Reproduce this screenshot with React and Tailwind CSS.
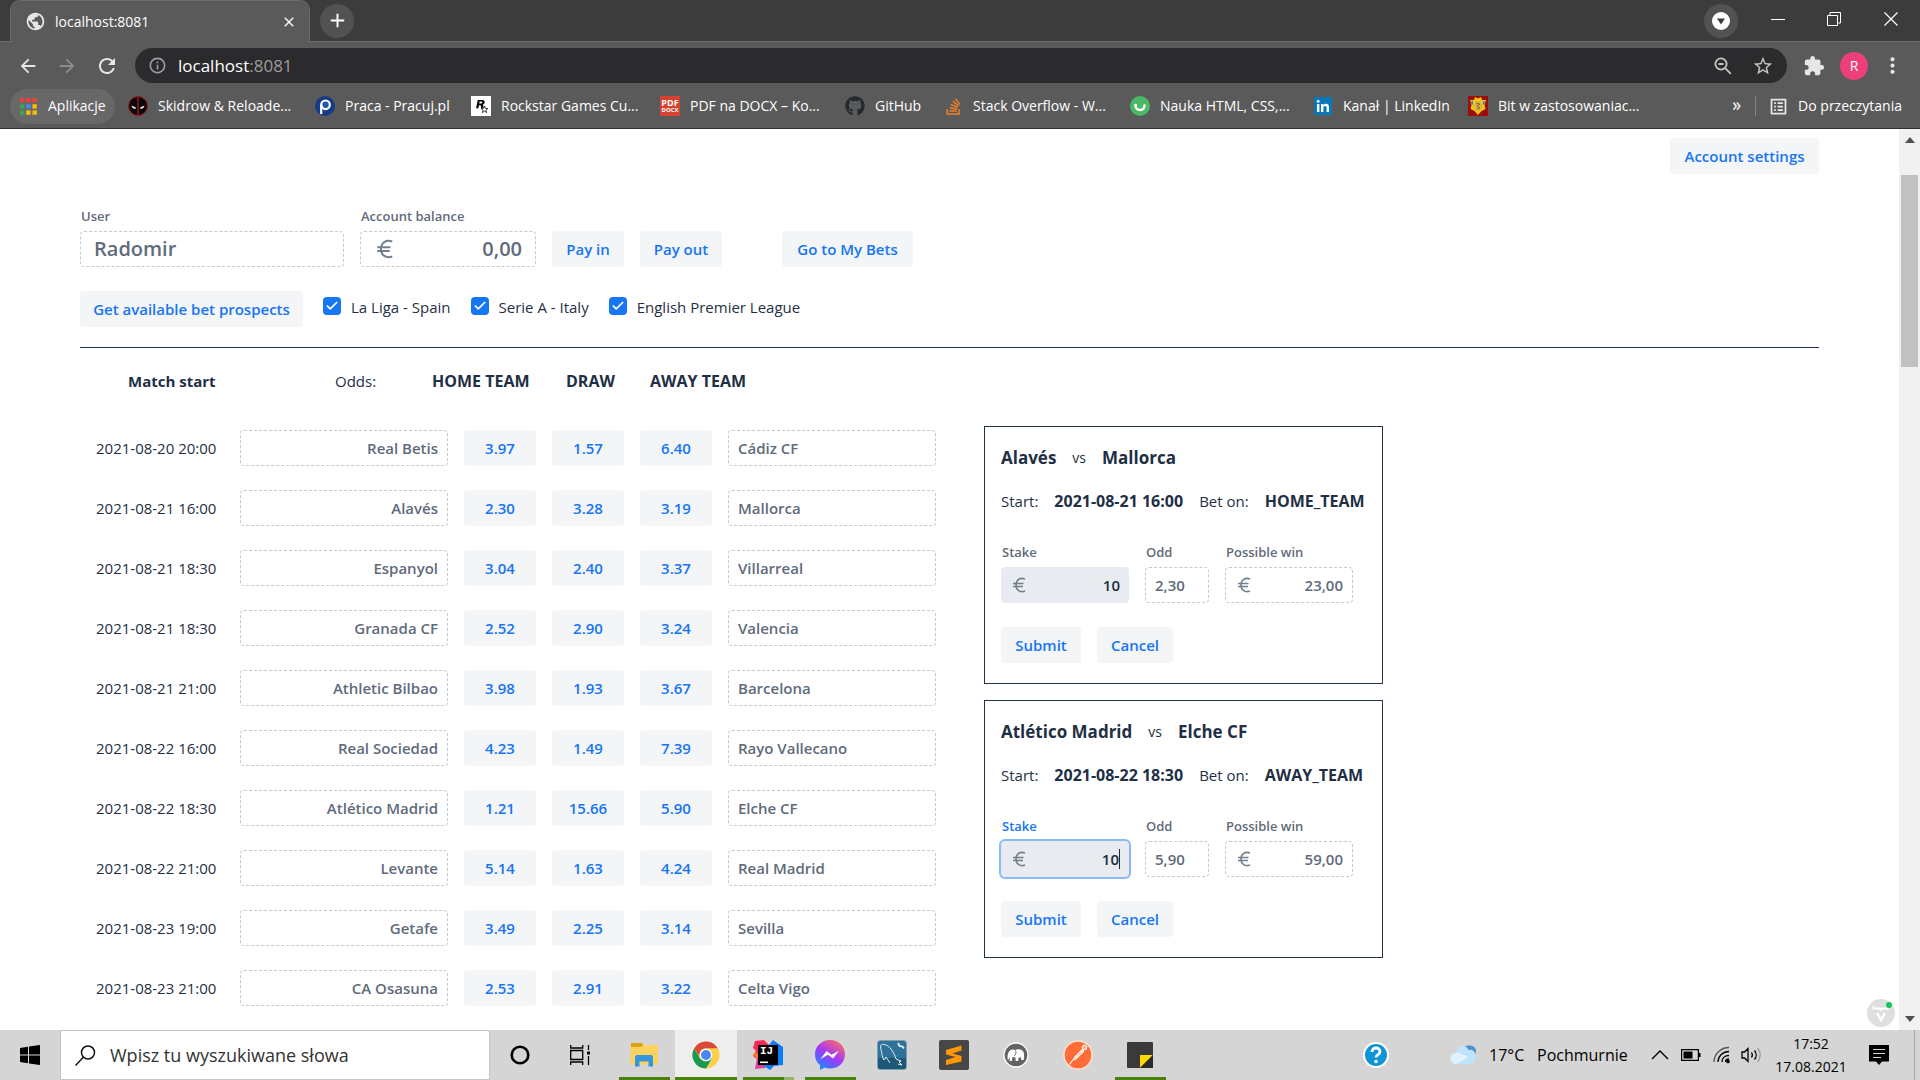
import React from "react";
import { FaGithub, FaStackOverflow } from "react-icons/fa";
import {
  MdArrowBack,
  MdArrowForward,
  MdRefresh,
  MdInfoOutline,
  MdStarBorder,
  MdExtension,
  MdMoreVert,
  MdPublic,
  MdClose,
  MdAdd,
  MdOutlineListAlt,
} from "react-icons/md";
import { Check } from "lucide-react";

const MATCHES = [
  ["2021-08-20 20:00", "Real Betis", "3.97", "1.57", "6.40", "Cádiz CF"],
  ["2021-08-21 16:00", "Alavés", "2.30", "3.28", "3.19", "Mallorca"],
  ["2021-08-21 18:30", "Espanyol", "3.04", "2.40", "3.37", "Villarreal"],
  ["2021-08-21 18:30", "Granada CF", "2.52", "2.90", "3.24", "Valencia"],
  ["2021-08-21 21:00", "Athletic Bilbao", "3.98", "1.93", "3.67", "Barcelona"],
  ["2021-08-22 16:00", "Real Sociedad", "4.23", "1.49", "7.39", "Rayo Vallecano"],
  ["2021-08-22 18:30", "Atlético Madrid", "1.21", "15.66", "5.90", "Elche CF"],
  ["2021-08-22 21:00", "Levante", "5.14", "1.63", "4.24", "Real Madrid"],
  ["2021-08-23 19:00", "Getafe", "3.49", "2.25", "3.14", "Sevilla"],
  ["2021-08-23 21:00", "CA Osasuna", "2.53", "2.91", "3.22", "Celta Vigo"],
];

/* ---------- browser window ---------- */

function TabStrip() {
  return (
    <div className="flex h-[42px] shrink-0 items-center border-b border-[#6b6b6b] bg-[#3c3c3c] pl-[10px]">
      <div className="mt-px flex h-[42px] w-[300px] items-center rounded-t-[10px] border border-b-0 border-[#6b6b6b] bg-[#5a5a5a] pr-3 pl-[14px] text-white">
        <MdPublic size={21} className="text-[#e6e6e6]" />
        <span className="ml-[9px] flex-1 text-sm">localhost:8081</span>
        <button aria-label="Close tab"><MdClose size={16} /></button>
      </div>
      <button aria-label="New tab" className="ml-[10px] flex size-[34px] items-center justify-center rounded-full bg-[#525252] text-white">
        <MdAdd size={23} />
      </button>
      <div className="flex-1" />
      <button aria-label="Search tabs" className="flex size-[34px] items-center justify-center rounded-full bg-[#525252]">
        <svg width="18" height="18" viewBox="0 0 18 18"><circle cx="9" cy="9" r="9" fill="#fff" /><path d="M5 6.500h8L9 12.500z" fill="#3c3c3c" /></svg>
      </button>
      <div className="ml-3 flex items-center pb-1 text-white">
        <button aria-label="Minimize" className="flex h-8 w-14 items-center justify-center">
          <svg width="14" height="14" viewBox="0 0 14 14" stroke="currentColor"><path d="M0 7.500h14" /></svg>
        </button>
        <button aria-label="Restore" className="flex h-8 w-14 items-center justify-center">
          <svg width="14" height="14" viewBox="0 0 14 14" fill="none" stroke="currentColor"><path d="M.5 3.500h10v10H.5zM3 3V.5h10.500v10.500H11" /></svg>
        </button>
        <button aria-label="Close" className="flex h-8 w-[58px] items-center justify-center">
          <svg width="14" height="14" viewBox="0 0 14 14" stroke="currentColor" strokeWidth="1.200"><path d="M.5.5l13 13M13.500.5l-13 13" /></svg>
        </button>
      </div>
    </div>
  );
}

function Toolbar() {
  return (
    <div className="flex h-[47px] shrink-0 items-center bg-[#5a5a5a] pr-[15px] pl-[17px] text-[#e6e6e6]">
      <button aria-label="Back" className="w-[39px]"><MdArrowBack size={22} /></button>
      <button aria-label="Forward" className="w-[39px] text-[#8d8d8d]"><MdArrowForward size={22} /></button>
      <button aria-label="Reload" className="w-10"><MdRefresh size={24} /></button>
      <div className="flex h-[35px] flex-1 items-center rounded-full bg-[#2b2b2d] px-[13px]">
        <MdInfoOutline size={19} className="text-[#9aa0a6]" />
        <div role="textbox" aria-label="Address" className="ml-[11px] flex-1 text-[17px] text-white">
          localhost<span className="text-[#9b9b9d]">:8081</span>
        </div>
        <button aria-label="Zoom level">
          <svg width="18" height="18" viewBox="0 0 18 18" fill="none" stroke="#c5c5c5" strokeWidth="1.800"><circle cx="7" cy="7" r="5.600" /><path d="M11.200 11.200l5.600 5.600M4.500 7h5" /></svg>
        </button>
        <button aria-label="Bookmark" className="ml-5 text-[#c5c5c5]"><MdStarBorder size={22} /></button>
      </div>
      <button aria-label="Extensions" className="ml-4"><MdExtension size={22} /></button>
      <button aria-label="Profile" className="ml-[15px] flex size-7 items-center justify-center rounded-full bg-[#ec407a] text-sm text-white">R</button>
      <button aria-label="Menu" className="ml-3"><MdMoreVert size={25} /></button>
    </div>
  );
}

const apps = ["#ea4335", "#ea4335", "#ea4335", "#34a853", "#4285f4", "#fbbc05", "#34a853", "#fbbc05", "#fbbc05"];

function AppsIcon() {
  return (
    <svg width="17" height="17" viewBox="0 0 17 17">
      {apps.map((c, i) => (
        <rect key={i} x={(i % 3) * 6.2} y={Math.floor(i / 3) * 6.2} width="4.400" height="4.400" fill={c} />
      ))}
    </svg>
  );
}

function MaskIcon() {
  return (
    <svg width="20" height="20" viewBox="0 0 20 20">
      <circle cx="10" cy="10" r="9.500" fill="#0a0a0a" stroke="#a31621" />
      <path d="M9.400 1h1.200v18H9.400z" fill="#c4161c" />
      <path d="M3.500 9.500l4.500 2.200c0 1.800-3.700 1.200-4.500-2.200zM16.500 9.500L12 11.700c0 1.800 3.700 1.200 4.500-2.200z" fill="#fff" />
    </svg>
  );
}

function PracujIcon() {
  return (
    <svg width="20" height="20" viewBox="0 0 20 20">
      <circle cx="10" cy="10" r="10" fill="#163c86" />
      <circle cx="10.500" cy="8.800" r="4.300" fill="#1e57ad" stroke="#fff" strokeWidth="2.200" />
      <path d="M6.200 8.500V18" stroke="#fff" strokeWidth="2.200" />
    </svg>
  );
}

function RockstarIcon() {
  return (
    <svg width="20" height="20" viewBox="0 0 20 20">
      <path d="M0 0h20v20H0z" fill="#fff" />
      <path d="M6.800 4h4.600c3.200 0 2.900 4 .2 4.600 1.200.5.600 2 .7 3.100l-2.200.2c-.4-1 .3-2.700-1-2.700H8l-.6 3H5.100zM8.600 5.600l-.4 2h1.900c1.500 0 1.700-2 .2-2z" fill="#000" fillRule="evenodd" />
      <path d="M13.500 10l.9 2.400 2.500.1-2 1.600.8 2.500-2.200-1.500-2.100 1.500.7-2.500-2-1.600 2.500-.1z" fill="#fff" stroke="#111" strokeWidth=".8" />
    </svg>
  );
}

function PdfIcon() {
  return (
    <span className="flex size-5 flex-col items-center justify-center bg-[#d8412f] font-bold text-white">
      <span className="text-[9px] leading-[9px]">PDF</span>
      <span className="text-[6px] leading-[7px]">DOCX</span>
    </span>
  );
}

function SmileIcon() {
  return (
    <svg width="20" height="20" viewBox="0 0 20 20">
      <circle cx="10" cy="10" r="10" fill="#4bb865" />
      <path d="M5.500 9.500c0 6 9 6 9 0" fill="none" stroke="#fff" strokeWidth="2.500" strokeLinecap="round" />
      <circle cx="5.600" cy="9" r="1.300" fill="#fff" />
    </svg>
  );
}

function LinkedInIcon() {
  return (
    <svg width="18" height="18" viewBox="0 0 18 18">
      <rect width="18" height="18" rx="1" fill="#0a77b7" />
      <path d="M3 7h2.400v8H3zM7 7h2.300v1.200C10 7.200 10.800 6.800 12 6.800c2.300 0 3 1.500 3 3.700V15h-2.400v-4c0-1.200-.3-2-1.400-2-1.200 0-1.800.9-1.800 2.100V15H7z" fill="#fff" />
      <circle cx="4.200" cy="4.400" r="1.400" fill="#fff" />
    </svg>
  );
}

function CrestIcon() {
  return (
    <svg width="20" height="20" viewBox="0 0 20 20">
      <path d="M0 0h20v20H0z" fill="#9c0d0d" />
      <path d="M7 1l3 1.500L13 1l1 3h4l-1.500 5 1 4-4 2-3.500 4-3.500-4-4-2 1-4L2 4h4z" fill="#f0c419" />
      <path d="M2 6l3-1v4zM18 6l-3-1v4z" fill="#4c75b8" />
      <ellipse cx="10" cy="10" rx="3.600" ry="4.600" fill="#d9b04a" />
      <path d="M8 7l4 1-3 2 3 2-3 1.500" stroke="#8d6b20" fill="none" />
    </svg>
  );
}

function Bookmark({ icon, label, width }) {
  return (
    <a href="#bookmark" className={`flex shrink-0 items-center gap-[10px] whitespace-nowrap ${width}`}>
      <span className="flex w-5 justify-center">{icon}</span>
      {label}
    </a>
  );
}

function Bookmarks() {
  return (
    <nav className="flex h-10 shrink-0 items-center border-b border-[#2f2f31] bg-[#5a5a5a] pb-[5px] pl-[10px] text-sm text-white">
      <a href="#apps" className="mr-[13px] flex h-[35px] w-[105px] items-center gap-[11px] rounded-full bg-[#686868] pl-[10px]">
        <AppsIcon />
        Aplikacje
      </a>
      <Bookmark icon={<MaskIcon />} label="Skidrow & Reloade..." width="w-[187px]" />
      <Bookmark icon={<PracujIcon />} label="Praca - Pracuj.pl" width="w-[156px]" />
      <Bookmark icon={<RockstarIcon />} label="Rockstar Games Cu..." width="w-[189px]" />
      <Bookmark icon={<PdfIcon />} label="PDF na DOCX – Ko..." width="w-[185px]" />
      <Bookmark icon={<FaGithub size={20} color="#24292e" />} label="GitHub" width="w-[98px]" />
      <Bookmark icon={<FaStackOverflow size={19} color="#f48024" />} label="Stack Overflow - W..." width="w-[187px]" />
      <Bookmark icon={<SmileIcon />} label="Nauka HTML, CSS,..." width="w-[183px]" />
      <Bookmark icon={<LinkedInIcon />} label="Kanał | LinkedIn" width="w-[155px]" />
      <Bookmark icon={<CrestIcon />} label="Bit w zastosowaniac..." width="w-[190px]" />
      <span className="flex-1" />
      <button aria-label="More bookmarks" className="pb-1 text-lg">»</button>
      <span className="mr-3 ml-[14px] h-5 w-px bg-[#858585]" />
      <button className="mr-[18px] flex items-center gap-[9px]">
        <MdOutlineListAlt size={21} className="text-[#e6e6e6]" />
        Do przeczytania
      </button>
    </nav>
  );
}

/* ---------- page ---------- */

function Btn({ children, className = "" }) {
  return (
    <button className={`h-9 rounded bg-[#f3f5f7] text-center text-[15px] font-semibold whitespace-nowrap text-[#1676f3] ${className}`}>
      {children}
    </button>
  );
}

function Field({ id, label, value, width, large, euro, right, kind = "readonly" }) {
  const box = {
    readonly: "border border-dashed border-[#c3c9d1] text-[#5f6b7b]",
    filled: "bg-[#e8ebef] text-[#1b2b41]",
    focused: "bg-[#e8ebef] text-[#1b2b41] ring-2 ring-[#8abaf9]",
  }[kind];
  return (
    <div className={`flex flex-col ${width}`}>
      <label htmlFor={id} className={`mb-1 pl-px text-[13px] leading-[21px] font-semibold whitespace-nowrap ${kind === "focused" ? "text-[#1676f3]" : "text-[#5f6b7b]"}`}>
        {label}
      </label>
      <div className={`flex h-9 items-center rounded ${box} ${large ? "px-[13px] text-xl" : "px-[9px] text-[15px]"}`}>
        {euro && <EuroIcon large={large} />}
        <input
          id={id}
          defaultValue={value}
          readOnly={kind === "readonly"}
          className={`w-full min-w-0 flex-1 bg-transparent font-semibold outline-none ${right ? "text-right" : ""}`}
        />
        {kind === "focused" && <span className="h-5 w-px bg-[#1b2b41]" />}
      </div>
    </div>
  );
}

function EuroIcon({ large }) {
  return (
    <svg className={large ? "ml-[2px] size-5" : "ml-[2px] size-4"} viewBox="0 0 16 16" fill="none" stroke="#737f8e" strokeWidth="1.600">
      <path d="M13 2C8 .2 4 3 4 8s4 7.800 9 6M1 6.500h10.500M1 9.500h10" />
    </svg>
  );
}

function League({ id, label }) {
  return (
    <div className="flex items-start">
      <span className="relative mt-[6px] size-[18px]">
        <input id={id} type="checkbox" defaultChecked className="block size-[18px] appearance-none rounded bg-[#1676f3]" />
        <Check size={14} strokeWidth={3} className="pointer-events-none absolute top-[2px] left-[2px] text-white" />
      </span>
      <label htmlFor={id} className="mt-1 pl-[10px] text-[15px] leading-6 whitespace-nowrap">{label}</label>
    </div>
  );
}

function MatchTable() {
  const team = "block h-9 w-[208px] rounded border border-dashed border-[#c3c9d1] px-[9px] text-[15px] font-semibold text-[#5f6b7b]";
  return (
    <table className="block text-[15px]">
      <thead className="block">
        <tr className="flex py-[21px] leading-6 whitespace-nowrap">
          <th className="w-[255px] pl-12 text-left font-bold">Match start</th>
          <th className="w-[97px] text-left font-normal">Odds:</th>
          <th className="w-[134px] text-left text-base font-bold">HOME TEAM</th>
          <th className="w-[84px] text-left text-base font-bold">DRAW</th>
          <th className="text-left text-base font-bold">AWAY TEAM</th>
        </tr>
      </thead>
      <tbody className="flex flex-col gap-6 pt-4">
        {MATCHES.map(([time, home, h, d, a, away], i) => (
          <tr key={i} className="flex items-center gap-4">
            <td className="w-36 pl-4 whitespace-nowrap">{time}</td>
            <td><input readOnly aria-label="Home team" value={home} className={`${team} text-right`} /></td>
            <td><Btn className="w-[72px]">{h}</Btn></td>
            <td><Btn className="w-[72px]">{d}</Btn></td>
            <td><Btn className="w-[72px]">{a}</Btn></td>
            <td><input readOnly aria-label="Away team" value={away} className={team} /></td>
          </tr>
        ))}
      </tbody>
    </table>
  );
}

function BetSlip({ id, home, away, start, side, odd, win, focused }) {
  return (
    <section className="w-[399px] border border-[#233348] px-4 pt-4 pb-5">
      <h2 className="flex items-center gap-4 text-[17px] leading-[30px] font-bold">
        {home}
        <span className="text-sm font-normal">vs</span>
        {away}
      </h2>
      <p className="mt-4 flex gap-4 text-[15px] leading-6 whitespace-nowrap">
        <span>Start:</span>
        <b className="text-base">{start}</b>
        <span>Bet on:</span>
        <b className="text-base">{side}</b>
      </p>
      <div className="mt-[29px] flex gap-4">
        <Field id={`${id}-stake`} label="Stake" value="10" width="w-32" euro right kind={focused ? "focused" : "filled"} />
        <Field id={`${id}-odd`} label="Odd" value={odd} width="w-16" />
        <Field id={`${id}-win`} label="Possible win" value={win} width="w-32" euro right />
      </div>
      <div className="mt-6 flex gap-4">
        <Btn className="w-20">Submit</Btn>
        <Btn className="w-[76px]">Cancel</Btn>
      </div>
    </section>
  );
}

function Page() {
  return (
    <main className="min-w-0 flex-1 overflow-hidden bg-white px-20 pt-[9px] text-[#1f2f45]">
      <div className="flex justify-end">
        <Btn className="w-[149px]">Account settings</Btn>
      </div>
      <div className="mt-8 flex items-end gap-4">
        <Field id="user" label="User" value="Radomir" width="w-[264px]" large />
        <Field id="balance" label="Account balance" value="0,00" width="w-[176px]" large euro right />
        <Btn className="w-[72px]">Pay in</Btn>
        <Btn className="w-[82px]">Pay out</Btn>
        <Btn className="ml-11 w-[131px]">Go to My Bets</Btn>
      </div>
      <div className="mt-6 flex gap-5">
        <Btn className="w-[223px]">Get available bet prospects</Btn>
        <League id="laliga" label="La Liga - Spain" />
        <League id="seriea" label="Serie A - Italy" />
        <League id="premier" label="English Premier League" />
      </div>
      <hr className="mt-5 border-[#233348]" />
      <div className="flex gap-12">
        <MatchTable />
        <div className="flex flex-col gap-4 pt-[78px]">
          <BetSlip id="bet1" home="Alavés" away="Mallorca" start="2021-08-21 16:00" side="HOME_TEAM" odd="2,30" win="23,00" />
          <BetSlip id="bet2" home="Atlético Madrid" away="Elche CF" start="2021-08-22 18:30" side="AWAY_TEAM" odd="5,90" win="59,00" focused />
        </div>
      </div>
    </main>
  );
}

function Scrollbar() {
  return (
    <div className="flex w-[21px] shrink-0 flex-col items-center bg-[#f1f1f1] py-2">
      <svg width="10" height="6" viewBox="0 0 10 6"><path d="M0 6l5-6 5 6z" fill="#505050" /></svg>
      <div className="mt-8 h-48 w-[17px] bg-[#c1c1c1]" />
      <span className="flex-1" />
      <svg width="10" height="6" viewBox="0 0 10 6"><path d="M0 0l5 6 5-6z" fill="#505050" /></svg>
    </div>
  );
}

function DevBadge() {
  return (
    <button aria-label="Developer tools" className="absolute right-[25px] bottom-[3px]">
      <svg width="28" height="28" viewBox="0 0 28 28">
        <circle cx="14" cy="14" r="14" fill="#dfdfdf" />
        <path d="M6.500 7v2.500h6L14 11l1.500-1.500h6" fill="none" stroke="#fff" strokeWidth="2" />
        <path d="M10 14l4 7 4-7" fill="none" stroke="#fff" strokeWidth="2.400" />
        <circle cx="22" cy="6" r="3" fill="#12c45a" />
      </svg>
    </button>
  );
}

/* ---------- taskbar ---------- */

function FolderIcon() {
  return (
    <svg width="28" height="24" viewBox="0 0 28 24">
      <path d="M1 0h11l1.500 2L12 5H1z" fill="#e09f10" />
      <path d="M.5 4H11l2-2h14a1 1 0 011 1v18.500H.5z" fill="#fdd35f" />
      <path d="M5 23.500V14a2 2 0 012-2h14a2 2 0 012 2v9.500h-4.500v-5h-9v5z" fill="#3595dd" />
    </svg>
  );
}

function ChromeIcon() {
  return (
    <svg width="28" height="28" viewBox="0 0 28 28">
      <circle cx="14" cy="14" r="13.500" fill="#fcd04b" />
      <path d="M2.300 7.200A13.500 13.500 0 0014 27.500l6-10.200-6 3.200-6-3z" fill="#189a50" />
      <path d="M2.300 7.200A13.500 13.500 0 0125.700 7.300H14c-5 0-7 4-6.500 8.500z" fill="#d94a3d" />
      <circle cx="14" cy="14" r="6.300" fill="#fff" />
      <circle cx="14" cy="14" r="5" fill="#4a87ee" />
    </svg>
  );
}

function IdeaIcon() {
  return (
    <span className="relative block size-[30px]">
      <svg width="30" height="30" viewBox="0 0 30 30">
        <path d="M2 1l9-1 6 6-9 16-8-6 3-5-3-3z" fill="#fe2857" />
        <path d="M0 14l8-2-2 9z" fill="#fc801d" />
        <path d="M4 18l10 4-2 6-10 1z" fill="#dd3ea0" />
        <path d="M16 5l4-5 10 7v18l-9 1-4 4-6-4z" fill="#087cfa" />
        <path d="M5 5h20v20H5z" fill="#000" />
        <path d="M7 21.500h8v1.600H7z" fill="#fff" />
      </svg>
      <span className="absolute top-[6px] left-[7px] font-['Liberation_Mono'] text-[11px] leading-[10px] font-bold text-white">IJ</span>
    </span>
  );
}

function MessengerIcon() {
  return (
    <svg width="30" height="30" viewBox="0 0 30 30">
      <defs>
        <linearGradient id="msg" x1=".15" y1="1" x2=".8" y2="0">
          <stop offset="0" stopColor="#0a95ff" />
          <stop offset=".5" stopColor="#a237fb" />
          <stop offset="1" stopColor="#ff6a68" />
        </linearGradient>
      </defs>
      <path d="M15 0C6.500 0 0 6.200 0 14.500c0 4.400 1.800 8 5 10.600V30l4.500-2.500c1.700.6 3.600.9 5.500.9 8.500 0 15-6 15-14C30 6.200 23.500 0 15 0z" fill="url(#msg)" />
      <path d="M5.500 19l6-8 5 3.800 7.500-4-6 7.700-5-3.800z" fill="#fff" />
    </svg>
  );
}

function MySqlIcon() {
  return (
    <svg width="30" height="30" viewBox="0 0 30 30">
      <rect x=".5" y=".5" width="29" height="29" rx="3" fill="#2f7199" stroke="#7f9fb2" />
      <path d="M1 18h28v9a2 2 0 01-2 2H3a2 2 0 01-2-2z" fill="#1f5777" />
      <path d="M7 20c-2-3-2-6-2.500-8.500C3.500 8 3 5 4.500 4.500 7 4 11 5 14 9c3 4 4 7 5 10l5 2-2 1 3 3-4-1M7 20l2-3 4 6" fill="none" stroke="#e4eef4" strokeWidth="1" />
      <path d="M21 3l1.500 3 3 .5 1.500 2" fill="none" stroke="#e4eef4" strokeWidth="1.800" />
    </svg>
  );
}

function SublimeIcon() {
  return (
    <svg width="30" height="30" viewBox="0 0 30 30">
      <rect width="30" height="30" rx="2" fill="#474747" />
      <path d="M22.500 5.500v5l-9 3 9 2.500v5.500L7 25v-5l9.500-3L7 14.500V10z" fill="#ff9800" />
    </svg>
  );
}

function ElephantIcon() {
  return (
    <svg width="26" height="26" viewBox="0 0 26 26">
      <circle cx="13" cy="13" r="12" fill="#646464" stroke="#fff" strokeWidth="1.300" />
      <path d="M5 18.500c-1-3-.5-8 2-10 1.500-1.500 4-1.200 5.500-.5C16 6.500 20.500 7.500 21 12c.3 2 0 4-.3 6h-2.500l-.5-3.500c-.6 1-1.200 1.400-2.200 1.500l-.3 3h-2.500l-.4-4c-1.200.3-2 .2-3 0l-.3 4H6.700V15z" fill="#fff" />
      <path d="M12.500 8.500c1 2 .5 4.500-1.500 5.500" stroke="#646464" strokeWidth=".9" fill="none" />
    </svg>
  );
}

function PostmanIcon() {
  return (
    <svg width="30" height="30" viewBox="0 0 30 30">
      <circle cx="15" cy="15" r="14" fill="#ff6c37" stroke="#fbe3d8" strokeWidth="1.400" />
      <circle cx="21.500" cy="7.500" r="2.300" fill="#ffb090" stroke="#fff" />
      <path d="M19.500 9.500l-7.500 7.500 2.500.5 6-6zM12 17l-5.500 7.500M14.500 17.500l-3.500 2.500" fill="#ffb090" stroke="#fff" strokeWidth="1.100" />
    </svg>
  );
}

function NotesIcon() {
  return (
    <svg width="26" height="26" viewBox="0 0 26 26">
      <rect width="26" height="26" rx="1" fill="#3a3a3a" />
      <path d="M13 13h13L13 26z" fill="#ffd800" />
      <path d="M26 13v13H13z" fill="#2b2b2b" />
    </svg>
  );
}

const TASKS = [
  { name: "Explorer", icon: <FolderIcon />, bar: "w-[51px] bg-[#47820b]" },
  { name: "Chrome", icon: <ChromeIcon />, bar: "w-full bg-[#47820b]", active: true },
  { name: "IntelliJ IDEA", icon: <IdeaIcon />, bar: "w-[51px] border-r-[10px] border-[#93b56c] bg-[#47820b]" },
  { name: "Messenger", icon: <MessengerIcon />, bar: "w-[51px] bg-[#47820b]" },
  { name: "MySQL Workbench", icon: <MySqlIcon /> },
  { name: "Sublime Text", icon: <SublimeIcon /> },
  { name: "MAMP", icon: <ElephantIcon /> },
  { name: "Postman", icon: <PostmanIcon /> },
  { name: "Notes", icon: <NotesIcon />, bar: "w-[51px] bg-[#47820b]" },
];

function Taskbar() {
  return (
    <footer className="flex h-[50px] shrink-0 items-center bg-[#d5d5d5] text-black">
      <button aria-label="Start" className="flex w-[60px] justify-center">
        <svg width="20" height="20" viewBox="0 0 20 20"><path d="M0 3l8-1.200v7.700H0zM9 1.600L20 0v9.500H9zM0 10.500h8v7.700L0 17zM9 10.500h11V20L9 18.400z" /></svg>
      </button>
      <label className="flex h-[50px] w-[430px] items-center border border-[#c4c4c4] bg-white pl-[14px]">
        <svg width="21" height="21" viewBox="0 0 21 21" fill="none" stroke="#111" strokeWidth="1.500"><circle cx="13" cy="7.500" r="6.500" /><path d="M8.500 12L.5 20.500" /></svg>
        <input aria-label="Search" placeholder="Wpisz tu wyszukiwane słowa" className="ml-[14px] flex-1 text-lg outline-none placeholder:text-[#333]" />
      </label>
      <button aria-label="Cortana" className="flex w-[60px] justify-center">
        <svg width="20" height="20" viewBox="0 0 20 20"><circle cx="10" cy="10" r="8.300" fill="none" stroke="#000" strokeWidth="2.600" /></svg>
      </button>
      <button aria-label="Task view" className="mr-[3px] flex w-[60px] justify-center">
        <svg width="20" height="20" viewBox="0 0 20 20" fill="none" stroke="#000" strokeWidth="1.300"><path d="M.7 0v3h12V0M.7 5.500h12v9H.7zM.7 20v-3h12v3M18.500 0v5M18.500 11v9" /><path d="M17 6.500h3v3h-3z" fill="#000" stroke="none" /></svg>
      </button>
      {TASKS.map((t) => (
        <button key={t.name} aria-label={t.name} className={`relative flex h-full w-[62px] items-center justify-center ${t.active ? "bg-[#eeeeee]" : ""}`}>
          {t.icon}
          {t.bar && <span className="absolute inset-x-0 bottom-0 flex justify-center"><span className={`h-[3px] ${t.bar}`} /></span>}
        </button>
      ))}
      <span className="flex-1" />
      <button aria-label="Help" className="mr-[61px]">
        <svg width="26" height="26" viewBox="0 0 26 26"><circle cx="13" cy="13" r="12" fill="#0f95d7" stroke="#fff" strokeWidth="2" /><path d="M9 10c0-5.500 8-5 8-.5 0 3-4 3.200-4 6" fill="none" stroke="#fff" strokeWidth="2.800" /><circle cx="13" cy="19.500" r="1.800" fill="#fff" /></svg>
      </button>
      <button className="flex items-center text-base whitespace-nowrap">
        <svg width="27" height="20" viewBox="0 0 27 20" className="mr-[12px]">
          <path d="M14 2c5-3 12-1 12 4 0 3-2 5-4 5z" fill="#4d8fd0" />
          <path d="M6 19a5.500 5.500 0 010-11C7 3 9 1 12.500 1S18 3 18.500 5c4-1 7 1.500 7 6 0 5-2 8-6 8z" fill="#bfe3fa" />
          <path d="M6 19a5.500 5.500 0 010-11c3-1 5 0 6.500 2 2-1 4.500 0 5 3" fill="#dff2fd" />
        </svg>
        <span className="w-12 text-left">17°C</span>
        <span className="w-[114px] text-left">Pochmurnie</span>
      </button>
      <svg width="18" height="10" viewBox="0 0 18 10" fill="none" stroke="#000" strokeWidth="1.400"><path d="M1 9l8-8 8 8" /></svg>
      <svg width="20" height="12" viewBox="0 0 20 12" className="ml-3"><path d="M.6.6h16.800v10.800H.6z" fill="none" stroke="#000" strokeWidth="1.200" /><path d="M2.500 2.500h9v7h-9zM18 4h1.500v4H18z" /></svg>
      <svg width="18" height="18" viewBox="0 0 18 18" fill="none" stroke="#000" strokeWidth="1.300" className="ml-3">
        <path d="M1 16C1 8 8 1.500 16 1.500" stroke="#555" /><path d="M5 16C5 10 10 5.500 16 5.500M9 16c0-4 3-6.500 7-6.500" /><path d="M12.500 16c0-2 1.500-3 3.500-3" /><circle cx="15" cy="15.500" r="1.200" fill="#000" />
      </svg>
      <svg width="22" height="18" viewBox="0 0 22 18" fill="none" stroke="#000" strokeWidth="1.300" className="ml-[10px]">
        <path d="M1 6h2.500L7 2.500v13L3.500 12H1zM10.500 6.500c1 1.500 1 3.500 0 5M13.500 4.500c2.200 2.600 2.200 6.400 0 9" /><path d="M16.500 2c3.600 4 3.600 10 0 14" stroke="#999" />
      </svg>
      <div className="ml-3 w-[72px] text-center text-sm leading-[23px]">
        <div>17:52</div>
        <div>17.08.2021</div>
      </div>
      <button aria-label="Notifications" className="mr-[25px] ml-[22px]">
        <svg width="20" height="20" viewBox="0 0 20 20"><path d="M0 0h20v16.500h-7L10 20l-3-3.500H0z" /><path d="M4 4.500h12M4 8.500h12M4 12.500h8" stroke="#d5d5d5" strokeWidth="1.200" /></svg>
      </button>
      <span className="mr-[5px] h-full w-px bg-[#a5a5a5]" />
    </footer>
  );
}

export default function App() {
  return (
    <div className="flex h-screen flex-col overflow-hidden font-['Open_Sans','Noto_Sans',sans-serif]">
      <TabStrip />
      <Toolbar />
      <Bookmarks />
      <div className="relative flex min-h-0 flex-1">
        <Page />
        <Scrollbar />
        <DevBadge />
      </div>
      <Taskbar />
    </div>
  );
}
